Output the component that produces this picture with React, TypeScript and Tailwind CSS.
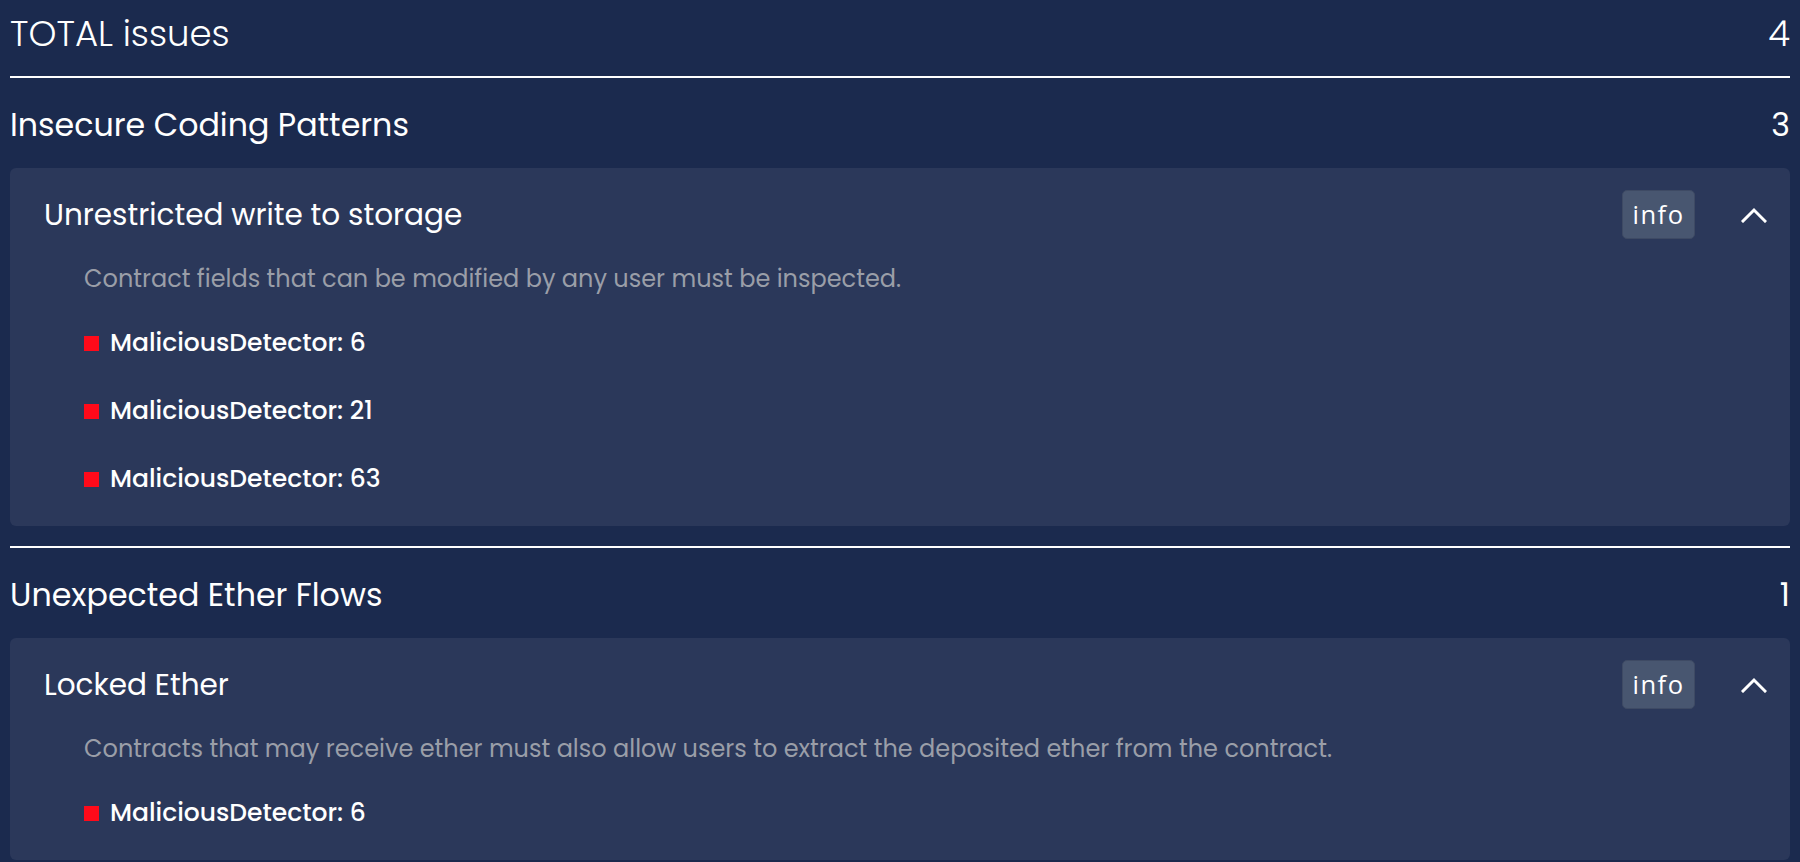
import React, { useState } from 'react'

interface Finding {
  title: string;
  description: string;
  lines: number[];
}

interface Category {
  name: string;
  findings: Finding[];
}

const categories: Category[] = [
  {
    name: 'Insecure Coding Patterns',
    findings: [
      {
        title: 'Unrestricted write to storage',
        description: 'Contract fields that can be modified by any user must be inspected.',
        lines: [6, 21, 63],
      },
    ],
  },
  {
    name: 'Unexpected Ether Flows',
    findings: [
      {
        title: 'Locked Ether',
        description: 'Contracts that may receive ether must also allow users to extract the deposited ether from the contract.',
        lines: [6],
      },
    ],
  },
]

const countIssues = (c: Category) => c.findings.reduce((n, f) => n + f.lines.length, 0)

const FindingCard: React.FC<{ finding: Finding }> = ({ finding }) => {
  const [open, setOpen] = useState(true)

  return (
    <div className="bg-[#2b385a] rounded-[6px] pl-[34px] pr-[23px] pt-[22px] pb-[33px]">
      <div className="flex items-center h-[49px]">
        <span className="flex-1 text-[29.5px] leading-[36px] font-normal">{finding.title}</span>
        <button className="h-[49px] w-[73px] rounded-[5px] border border-[#3e4a64] bg-[#485670] text-[25.5px] tracking-[1.5px] text-white font-['Open_Sans',sans-serif]">
          info
        </button>
        <button className="ml-[46px] w-[26px] h-[26px] flex items-center justify-center" onClick={() => setOpen(!open)}>
          <svg width="26" height="16" viewBox="0 0 26 16" fill="none">
            <polyline points="2,14 13,3 24,14" stroke="white" strokeWidth="3" strokeLinecap="square" />
          </svg>
        </button>
      </div>
      {open && (
        <div className="pl-[40px]">
          <p className="mt-[24px] text-[24px] leading-[32px] text-[#9a9ea8]">{finding.description}</p>
          <div className="mt-[34px] flex flex-col gap-[40px]">
            {finding.lines.map((l) => (
              <div key={l} className="flex items-center h-[28px]">
                <span className="w-[15px] h-[15px] bg-[#ff0a1a] mr-[11px]" />
                <span className="text-[25px] font-medium">MaliciousDetector: {l}</span>
              </div>
            ))}
          </div>
        </div>
      )}
    </div>
  )
}

const App: React.FC = () => {
  const total = categories.reduce((n, c) => n + countIssues(c), 0)

  return (
    <div className="min-h-screen bg-[#1b2a4e] px-[10px] text-white font-['Poppins','DejaVu_Sans',sans-serif]">
      <header className="flex justify-between items-center pt-[14px] pb-[22px]">
        <span className="text-[35.5px] leading-[40px] font-light">TOTAL issues</span>
        <span className="text-[35.5px] leading-[40px] font-light">{total}</span>
      </header>
      <hr className="h-[2px] border-0 bg-white" />

      {categories.map((c, i) => (
        <section key={c.name}>
          <div className="flex justify-between items-center pt-[27px] pb-[23px]">
            <span className="text-[31.7px] leading-[40px] font-normal">{c.name}</span>
            <span className="text-[31.7px] leading-[40px] font-normal">{countIssues(c)}</span>
          </div>
          {c.findings.map((f) => (
            <FindingCard key={f.title} finding={f} />
          ))}
          {i < categories.length - 1 && <hr className="mt-[20px] h-[2px] border-0 bg-white" />}
        </section>
      ))}
    </div>
  )
}

export default App
